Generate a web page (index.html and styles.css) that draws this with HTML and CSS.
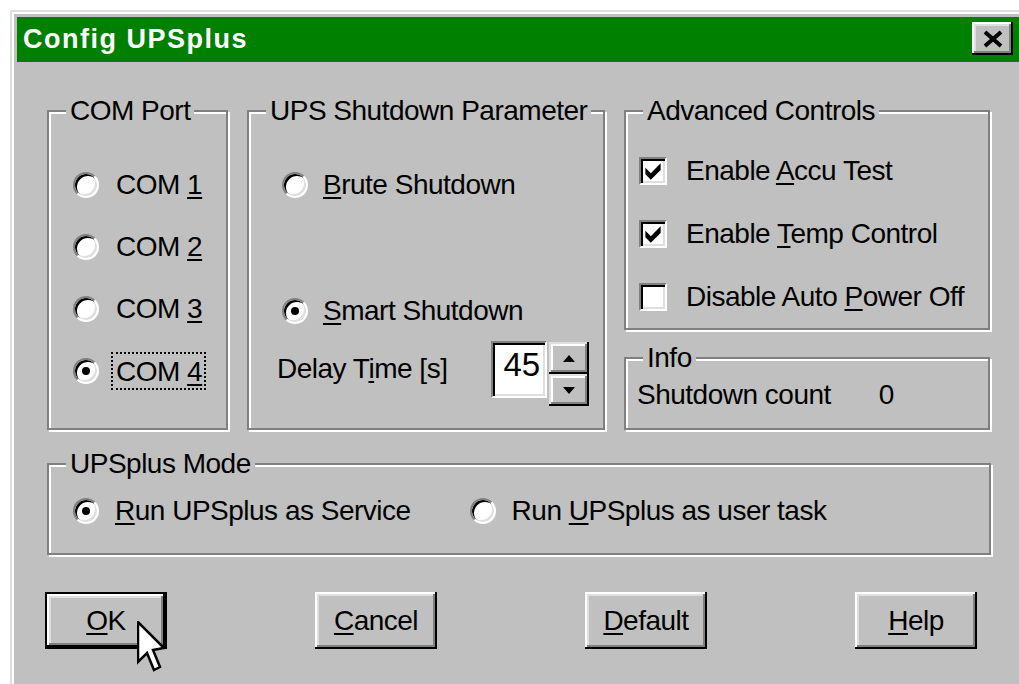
FILE: index.html
```html
<!DOCTYPE html>
<html lang="en">
<head>
<meta charset="utf-8">
<title>Config UPSplus</title>
<link rel="stylesheet" href="styles.css">
</head>
<body>
<div class="window">
  <div class="titlebar">
    <span class="title">Config UPSplus</span>
    <button class="close" aria-label="Close">
      <svg width="22" height="18" viewBox="0 0 22 18"><path d="M3 2 L19 16 M19 2 L3 16" stroke="#000" stroke-width="4" fill="none"/></svg>
    </button>
  </div>

  <div class="client">
    <div class="top-row">
      <section class="group">
        <div class="group-title">COM Port</div>
        <div class="com-body">
          <div class="opt"><span class="radio"></span><span>COM <u>1</u></span></div>
          <div class="opt"><span class="radio"></span><span>COM <u>2</u></span></div>
          <div class="opt"><span class="radio"></span><span>COM <u>3</u></span></div>
          <div class="opt"><span class="radio checked"></span><span class="focus">COM <u>4</u></span></div>
        </div>
      </section>

      <section class="group">
        <div class="group-title">UPS Shutdown Parameter</div>
        <div class="ups-body">
          <div class="opt"><span class="radio"></span><span><u>B</u>rute Shutdown</span></div>
          <div class="opt smart"><span class="radio checked"></span><span><u>S</u>mart Shutdown</span></div>
          <div class="delay">
            <span class="delay-label">Delay T<u>i</u>me [s]</span>
            <div class="spin">
              <div class="spin-edit">45</div>
              <div class="spin-buttons">
                <span class="spin-btn"><svg width="12" height="7" viewBox="0 0 12 7"><path d="M6 0 L12 7 L0 7 Z"/></svg></span>
                <span class="spin-btn"><svg width="12" height="7" viewBox="0 0 12 7"><path d="M0 0 L12 0 L6 7 Z"/></svg></span>
              </div>
            </div>
          </div>
        </div>
      </section>

      <div class="right-col">
        <section class="group adv-group">
          <div class="group-title">Advanced Controls</div>
          <div class="adv-body">
            <div class="opt"><span class="check"><svg viewBox="1 1 11 11"><polygon points="3,5 5.5,7.5 10,3 10,6 5.5,10.5 3,8"/></svg></span><span>Enable <u>A</u>ccu Test</span></div>
            <div class="opt"><span class="check"><svg viewBox="1 1 11 11"><polygon points="3,5 5.5,7.5 10,3 10,6 5.5,10.5 3,8"/></svg></span><span>Enable <u>T</u>emp Control</span></div>
            <div class="opt"><span class="check"></span><span>Disable Auto <u>P</u>ower Off</span></div>
          </div>
        </section>
        <section class="group info-group">
          <div class="group-title">Info</div>
          <div class="info-body"><span>Shutdown count</span><span>0</span></div>
        </section>
      </div>
    </div>

    <section class="group mode-group">
      <div class="group-title">UPSplus Mode</div>
      <div class="mode-body">
        <div class="opt"><span class="radio checked"></span><span><u>R</u>un UPSplus as Service</span></div>
        <div class="opt"><span class="radio"></span><span>Run <u>U</u>PSplus as user task</span></div>
      </div>
    </section>

    <div class="buttons">
      <button class="btn default"><span><u>O</u>K</span>
        <svg class="pointer" width="30" height="52" viewBox="0 0 30 52"><polygon points="1,1 1,41 10,32 17,49 23,46 16,29 27,27" fill="#fff" stroke="#000" stroke-width="2.5" stroke-linejoin="miter"/></svg>
      </button>
      <button class="btn"><span><u>C</u>ancel</span></button>
      <button class="btn"><span><u>D</u>efault</span></button>
      <button class="btn"><span><u>H</u>elp</span></button>
    </div>
  </div>
</div>
</body>
</html>
```
FILE: styles.css
```css
* { box-sizing: border-box; }

html, body { margin: 0; }

body {
  width: 1019px;
  height: 684px;
  overflow: hidden;
  background: #fff;
  color: #000;
  font-family: "Liberation Sans", Arial, sans-serif;
  font-size: 28px;
  letter-spacing: -0.5px;
}

u {
  text-decoration-thickness: 2px;
  text-underline-offset: 3px;
}

/* dialog frame */
.window {
  margin: 10px 0 0 10px;
  width: 1009px;
  height: 674px;
  background: #c0c0c0;
  border-top: 2px solid #dfdfdf;
  border-left: 2px solid #dfdfdf;
  box-shadow: inset 2px 2px 0 #fff;
  padding: 5px 0 0 5px;
}

.titlebar {
  height: 45px;
  background: #008000;
  display: flex;
  align-items: center;
  justify-content: space-between;
  padding: 0 6px;
}

.title {
  color: #fff;
  font-weight: bold;
  font-size: 27px;
  letter-spacing: 1.5px;
}

.close {
  width: 41px;
  height: 33px;
  margin-top: -2px;
  padding: 0;
  border: 0;
  background: #c0c0c0;
  display: flex;
  align-items: center;
  justify-content: center;
  box-shadow: inset -2px -2px 0 #000, inset 2px 2px 0 #fff,
              inset -4px -4px 0 #808080, inset 4px 4px 0 #dfdfdf;
}

.client {
  padding: 48px 0 0 30px;
}

.top-row {
  display: grid;
  grid-template-columns: 181px 358px 366px;
  column-gap: 19px;
  height: 320px;
}

/* etched group box */
.group {
  display: flex;
  flex-direction: column;
  align-items: flex-start;
  border: 2px solid #808080;
  box-shadow: inset 2px 2px 0 #fff, 2px 2px 0 #fff;
}

.group-title {
  margin: -17px 0 0 17px;
  padding: 0 4px;
  line-height: 32px;
  background: #c0c0c0;
}

.opt {
  display: flex;
  align-items: center;
  height: 40px;
  gap: 17px;
  white-space: nowrap;
}

/* radio button */
.radio {
  flex: none;
  width: 26px;
  height: 26px;
  border-radius: 50%;
  border: 2px solid;
  border-color: #808080 #fff #fff #808080;
  background: #fff;
  box-shadow: inset 2px 2px 0 #000, inset -2px -2px 0 #dfdfdf;
  display: grid;
  place-items: center;
}

.radio.checked::after {
  content: "";
  width: 8px;
  height: 8px;
  border-radius: 50%;
  background: #000;
}

/* check box */
.check {
  flex: none;
  width: 28px;
  height: 28px;
  border: 2px solid;
  border-color: #808080 #fff #fff #808080;
  background: #fff;
  box-shadow: inset 2px 2px 0 #000, inset -2px -2px 0 #dfdfdf;
}

.check svg {
  display: block;
  width: 24px;
  height: 24px;
}

.focus {
  border: 2px dotted #000;
  padding: 1px 2px 0 3px;
  margin-left: -5px;
  line-height: 33px;
}

.com-body {
  display: flex;
  flex-direction: column;
  gap: 22px;
  padding: 38px 0 0 24px;
}

.ups-body {
  display: flex;
  flex-direction: column;
  padding: 38px 0 0 33px;
}

.ups-body .opt { gap: 15px; }

.smart { margin-top: 86px; }

.delay {
  display: flex;
  align-items: flex-start;
  margin-top: 10px;
}

.delay-label {
  line-height: 40px;
  margin: 8px 0 0 -5px;
  white-space: nowrap;
}

.spin {
  display: flex;
  align-items: flex-start;
  margin-left: 44px;
}

.spin-edit {
  width: 56px;
  height: 57px;
  background: #fff;
  border: 2px solid;
  border-color: #808080 #fff #fff #808080;
  box-shadow: inset 2px 2px 0 #000, inset -2px -2px 0 #dfdfdf;
  font-size: 33px;
  letter-spacing: 0;
  line-height: 33px;
  padding: 5px 0 0 10px;
}

.spin-buttons {
  display: flex;
  flex-direction: column;
  margin: 1px 0 0 2px;
}

.spin-btn {
  width: 40px;
  height: 32px;
  background: #c0c0c0;
  display: grid;
  place-items: center;
  box-shadow: inset -2px -2px 0 #000, inset 2px 2px 0 #dfdfdf,
              inset -4px -4px 0 #808080, inset 4px 4px 0 #fff;
}

.right-col {
  display: flex;
  flex-direction: column;
  gap: 27px;
}

.adv-group { height: 220px; }

.adv-body {
  display: flex;
  flex-direction: column;
  gap: 23px;
  padding: 24px 0 0 13px;
}

.adv-body .opt { gap: 19px; }

.info-group { height: 73px; }

.info-body {
  display: flex;
  gap: 48px;
  line-height: 32px;
  padding: 5px 0 0 11px;
}

.mode-group {
  margin-top: 33px;
  width: 944px;
  height: 92px;
}

.mode-body {
  display: flex;
  gap: 59px;
  padding: 11px 0 0 24px;
}

.mode-body .opt { gap: 16px; }

/* push buttons */
.buttons {
  display: flex;
  gap: 148px;
  margin: 37px 0 0 -2px;
}

.btn {
  position: relative;
  overflow: visible;
  width: 122px;
  height: 57px;
  padding: 0;
  border: 0;
  background: #c0c0c0;
  color: #000;
  font: inherit;
  letter-spacing: inherit;
  box-shadow: inset -2px -2px 0 #000, inset 2px 2px 0 #fff,
              inset -4px -4px 0 #808080, inset 4px 4px 0 #dfdfdf;
}

.btn.default {
  border: 2px solid #000;
}

.pointer {
  position: absolute;
  left: 90px;
  top: 27px;
}
```
